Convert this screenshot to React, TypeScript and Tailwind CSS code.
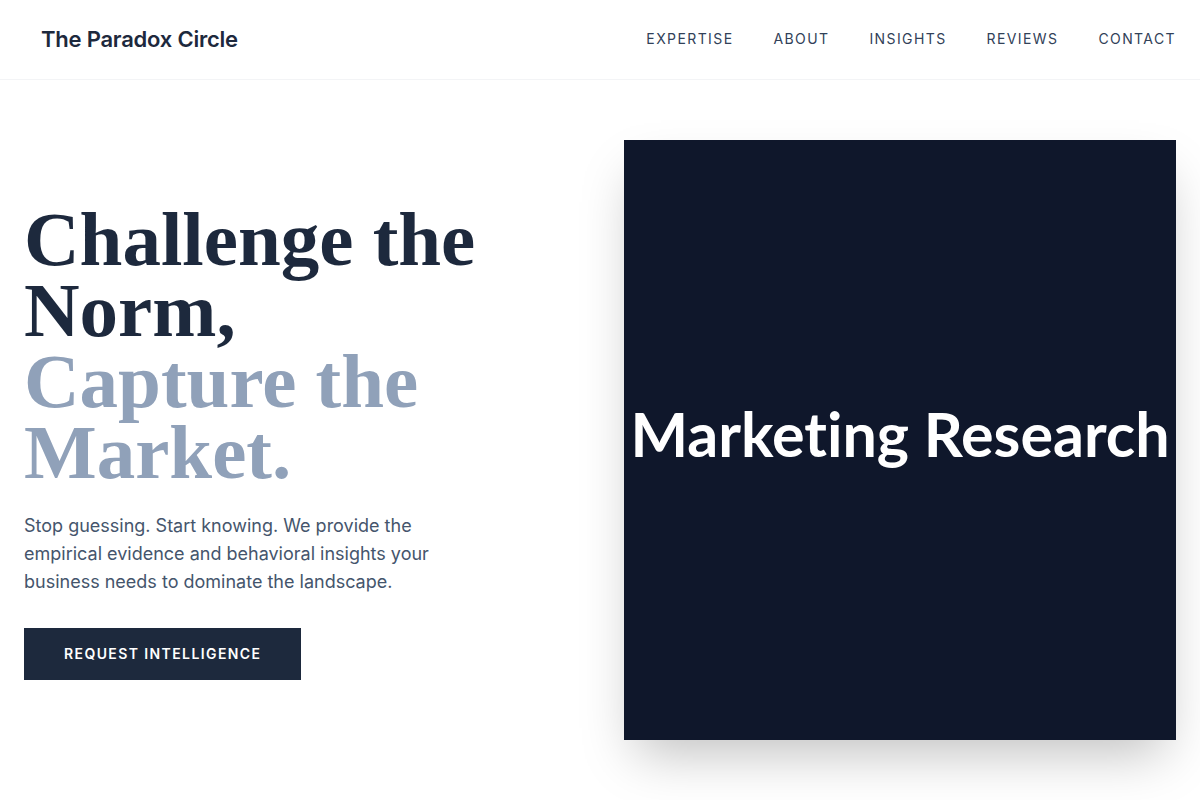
import React from "react";

export default function App() {
  const nav = ["EXPERTISE", "ABOUT", "INSIGHTS", "REVIEWS", "CONTACT"];
  return (
    <div className="min-h-screen bg-white" style={{ fontFamily: "Inter, 'Noto Sans', sans-serif" }}>
      <header className="h-20 border-b border-gray-100 flex items-center justify-between pl-[41px] pr-6">
        <div className="text-[22px] font-semibold tracking-[-0.01em] text-slate-800">The Paradox Circle</div>
        <nav className="flex items-center gap-10 mb-[2px]">
          {nav.map((n) => (
            <a key={n} className="text-sm tracking-widest text-slate-700">{n}</a>
          ))}
        </nav>
      </header>
      <main className="px-6 py-[60px] grid grid-cols-2 gap-12 items-center">
        <div className="pt-1">
          <h1
            className="text-[77px] leading-[71px] font-bold text-slate-800"
            style={{ fontFamily: "'Liberation Serif', 'DejaVu Serif', serif" }}
          >
            Challenge the Norm,
            <br />
            <span className="text-slate-400">Capture the Market.</span>
          </h1>
          <p className="mt-6 text-lg leading-7 text-slate-600 max-w-[420px]">
            Stop guessing. Start knowing. We provide the empirical evidence and behavioral insights your business needs to dominate the landscape.
          </p>
          <button className="mt-8 h-[52px] px-10 bg-slate-800 text-white text-sm font-semibold tracking-widest">
            REQUEST INTELLIGENCE
          </button>
        </div>
        <div className="h-[600px] bg-slate-900 shadow-2xl flex items-center justify-center">
          <span
            className="text-white text-[61px] font-bold mb-3 [font-variant-ligatures:none]"
            style={{ fontFamily: "Lato, 'Noto Sans', sans-serif" }}
          >
            Marketing Research
          </span>
        </div>
      </main>
    </div>
  );
}
